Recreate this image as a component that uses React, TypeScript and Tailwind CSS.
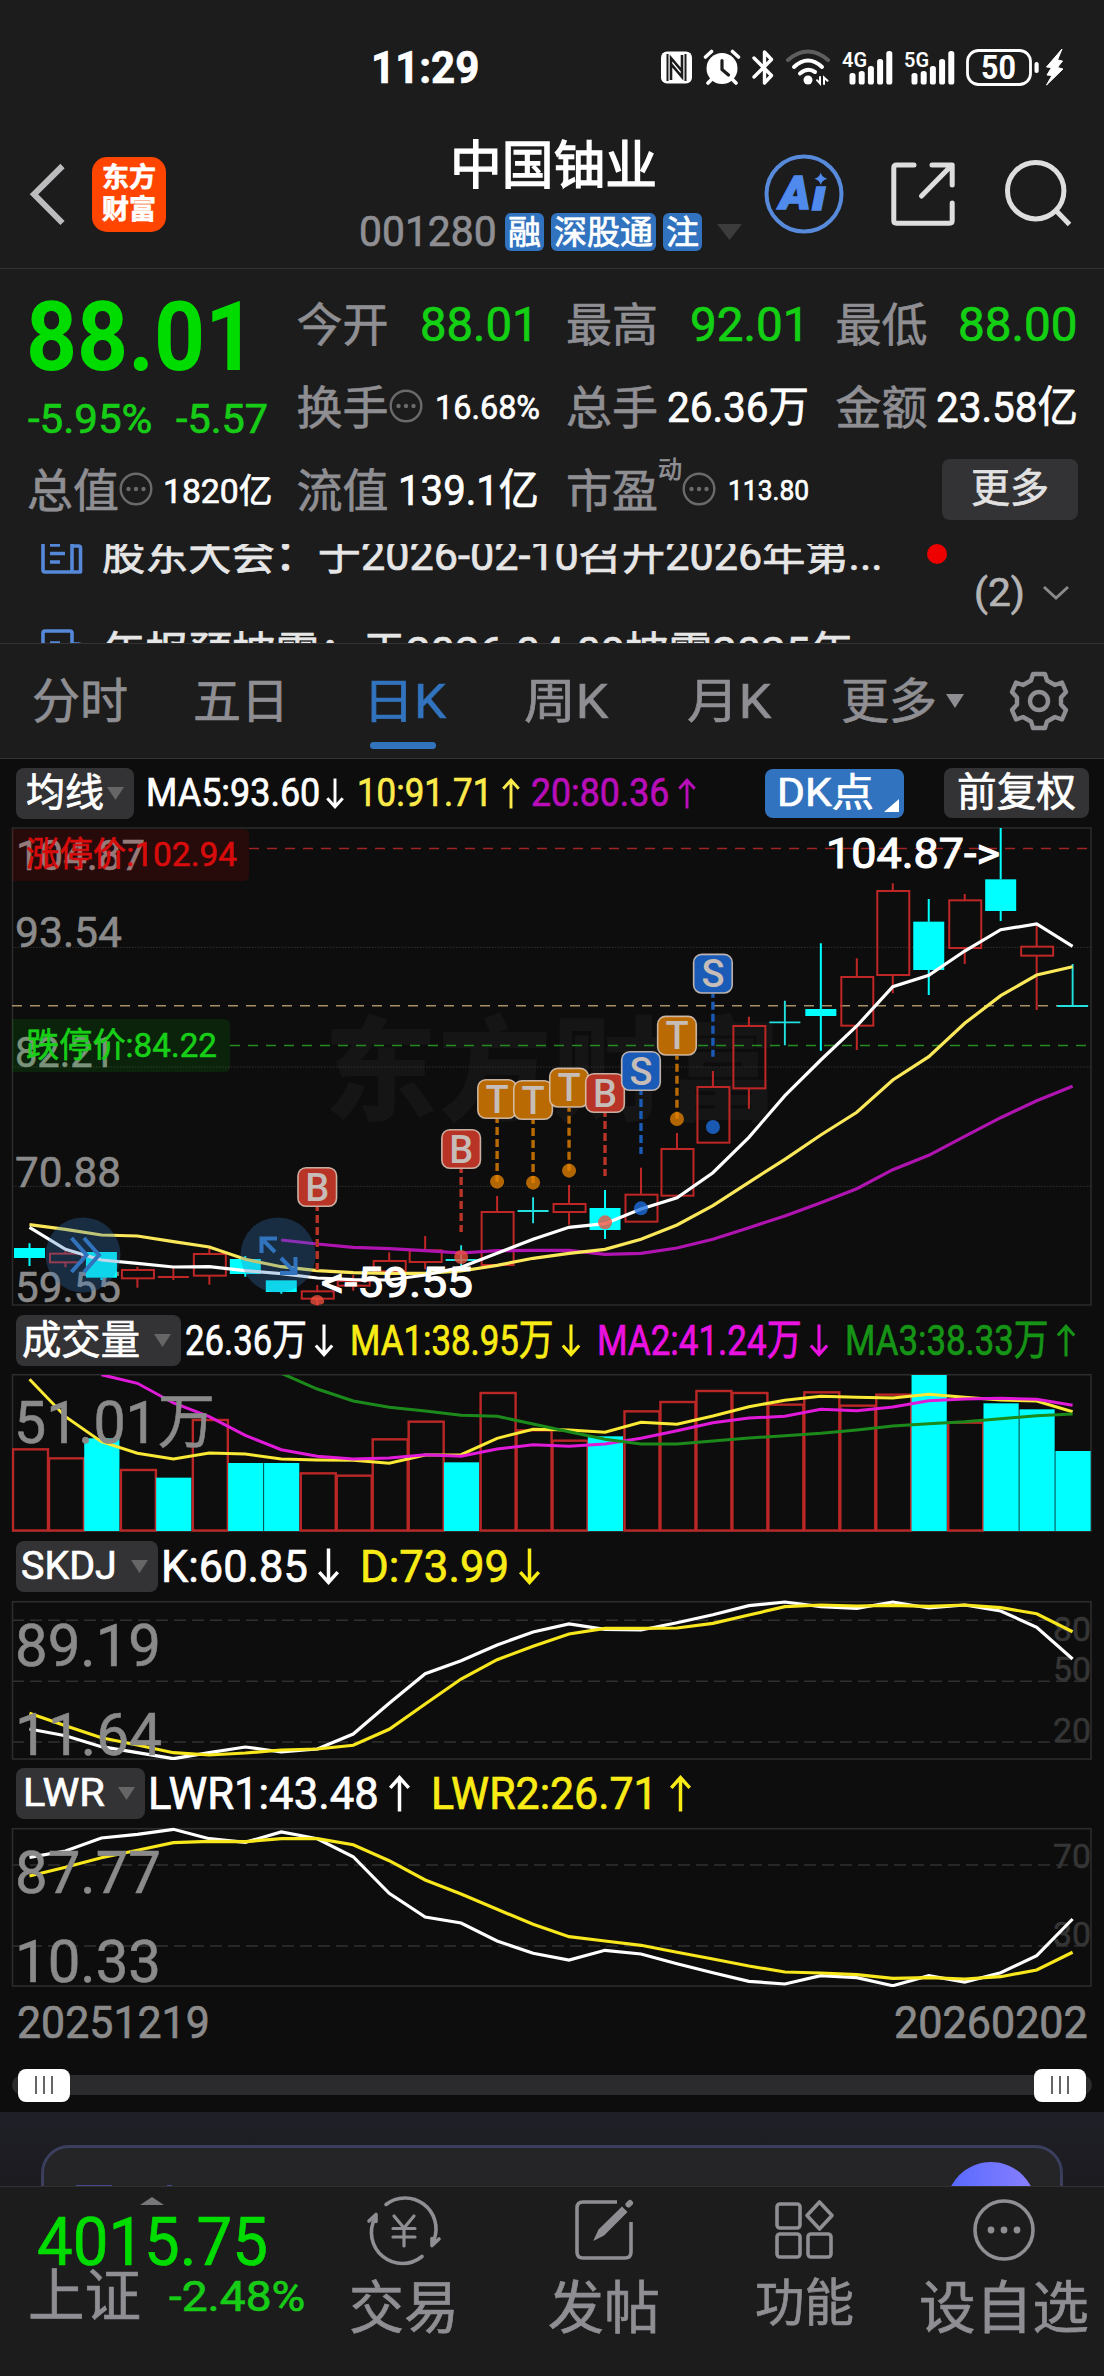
import { useLayoutEffect, useRef, type ReactNode } from "react";

/* Text squeezed or stretched horizontally to fill the width of its box. */
function Fit({ className = "", children }: { className?: string; children: ReactNode }) {
  const outer = useRef<HTMLSpanElement>(null);
  const inner = useRef<HTMLSpanElement>(null);
  useLayoutEffect(() => {
    const fit = () => {
      if (!outer.current || !inner.current) return;
      inner.current.style.transform = `scaleX(${outer.current.offsetWidth / inner.current.offsetWidth})`;
    };
    fit();
    document.fonts?.ready.then(fit);
  }, []);
  return (
    <span ref={outer} className={`inline-block shrink-0 whitespace-nowrap text-left leading-none ${className}`}>
      <span ref={inner} className="inline-block origin-left leading-none">{children}</span>
    </span>
  );
}

/* ---------- status bar ---------- */

const BARS = [73, 71, 66, 59, 51];
function Signal({ label }: { label: string }) {
  return (
    <svg className="h-[38px] w-[52px]" viewBox="842 49 52 38" fill="#fff">
      <text x="842" y="67" fontSize="20" fontWeight="600" textLength="25" lengthAdjust="spacingAndGlyphs">{label}</text>
      {BARS.map((y, i) => (
        <rect key={y} x={849.5 + i * 9.2} y={y} width="6" height={84.5 - y} rx="2.6" />
      ))}
    </svg>
  );
}

function StatusBar() {
  return (
    <div className="flex h-[136px] text-white">
      <div className="flex h-[136px] w-[661px] items-center pl-[371px]">
        <Fit className="w-[108px] text-[44px] font-bold">11:29</Fit>
      </div>
      <div className="flex h-[136px] items-center">
        <svg className="h-[38px] w-[32px]" viewBox="661 49 32 38">
          <rect x="661" y="51.5" width="31" height="32" rx="6" fill="#fff" />
          <path d="M667.5 54v27M685.5 54v27" stroke="#1c1c1c" strokeWidth="2" />
          <path d="M671 80V58l11 13M682 55v22l-11-13" stroke="#1c1c1c" strokeWidth="2.6" fill="none" />
        </svg>
        <svg className="ml-[10px] h-[38px] w-[38px]" viewBox="703 49 38 38">
          <circle cx="722" cy="68.5" r="15.5" fill="#fff" />
          <path d="M705.5 57l6-5.500M738.500 57l-6-5.500M712 79l-4 4M732 79l4 4" stroke="#fff" strokeWidth="3.600" strokeLinecap="round" />
          <path d="M722 60.500v9l6.500 5.500" stroke="#1c1c1c" strokeWidth="3.200" fill="none" strokeLinecap="round" />
        </svg>
        <svg className="ml-[10px] h-[38px] w-[24px]" viewBox="751 49 24 38" fill="none" stroke="#fff" strokeWidth="3.4" strokeLinejoin="round" strokeLinecap="round">
          <path d="M754 58l17.500 17.500-7 7.500V52l7 7.500L754 77" />
        </svg>
        <svg className="ml-[10px] h-[38px] w-[46px]" viewBox="785 49 46 38" fill="none" stroke="#fff" strokeWidth="4" strokeLinecap="round">
          <path d="M788 60Q808 43 828 60" stroke="#5e5e5e" />
          <path d="M794 67Q808 54 822 67" />
          <path d="M800 73.500Q808 67 815 72" />
          <circle cx="808" cy="80" r="4.500" fill="#fff" stroke="none" />
          <path d="M820 77v6.500l-3-3.300M824 84v-6.500l3.500 3.300" strokeWidth="2" />
        </svg>
        <span className="ml-[11px] flex"><Signal label="4G" /></span>
        <span className="ml-[10px] flex"><Signal label="5G" /></span>
        <svg className="ml-[10px] h-[38px] w-[100px]" viewBox="966 49 100 38">
          <rect x="967.500" y="50.500" width="63" height="34" rx="11" fill="none" stroke="#fff" strokeWidth="2.800" />
          <text x="981" y="79.300" fontSize="33" fontWeight="700" fill="#fff" textLength="35" lengthAdjust="spacingAndGlyphs">50</text>
          <rect x="1034.500" y="62" width="4.200" height="11" rx="2" fill="#fff" />
          <path d="M1062 49l-15.500 18 5 0.500-4.500 7.500 5 0.500-5.500 9.500 16.500-16-5.500-1.500 5-6.500-5-1z" fill="#fff" stroke="#fff" strokeWidth="1" strokeLinejoin="round" />
        </svg>
      </div>
    </div>
  );
}

/* ---------- header ---------- */

function Badge({ w, tw, children }: { w: string; tw: string; children: ReactNode }) {
  return (
    <span className={`flex h-[38px] items-center justify-center rounded-[6px] bg-[#3173bf] text-[33px] text-white ${w}`}>
      <Fit className={tw}>{children}</Fit>
    </span>
  );
}

function Header() {
  return (
    <header className="flex h-[133px] border-b border-[#333335]">
      <svg className="mt-[26px] ml-[28px] h-[66px] w-[40px]" viewBox="28 162 40 66" fill="none" stroke="#bcbcbe" strokeWidth="6">
        <path d="M62.500 166L34 194.300 62.500 223" />
      </svg>
      <div className="mt-[21px] ml-[24px] flex h-[75px] w-[74px] flex-col items-center justify-center rounded-[15px] bg-[#ff4500] text-[27px] leading-[31.500px] font-bold text-white">
        <span>东方</span>
        <span>财富</span>
      </div>
      <div className="ml-[182px] w-[400px]">
        <div className="flex h-[62px] items-center pl-[102px] text-[52px] text-white [-webkit-text-stroke:1.4px]">
          <Fit className="w-[207px]">中国铀业</Fit>
        </div>
        <div className="mt-[14px] flex h-[40px] items-center pl-[11px]">
          <Fit className="w-[138px] text-[42px] text-[#8e8e93]">001280</Fit>
          <span className="ml-[8px] flex gap-[7px]">
            <Badge w="w-[39px]" tw="w-[33px]">融</Badge>
            <Badge w="w-[105px]" tw="w-[99px]">深股通</Badge>
            <Badge w="w-[39px]" tw="w-[33px]">注</Badge>
          </span>
          <svg className="ml-[15px] h-[16px] w-[25px]" viewBox="0 0 25 16"><path d="M0 0h25L12.500 16z" fill="#3c3c3c" /></svg>
        </div>
      </div>
      <svg className="mt-[18px] ml-[16px] h-[80px] w-[80px] shrink-0" viewBox="764 154 80 80">
        <circle cx="804" cy="194" r="37.500" fill="none" stroke="#578adb" strokeWidth="4" />
        <g fill="#4f8aec" stroke="#4f8aec" strokeWidth="1.500" fontWeight="900" fontStyle="italic" fontSize="46">
          <text x="779.500" y="208.500" textLength="31" lengthAdjust="spacingAndGlyphs">A</text>
          <text x="812" y="209.500" fontSize="42" textLength="14" lengthAdjust="spacingAndGlyphs">ı</text>
        </g>
        <path d="M820.700 172.500Q822 177.500 827.200 178.700 822 180 820.700 185 819.500 180 814.500 178.700 819.500 177.500 820.700 172.500z" fill="#4f8aec" />
      </svg>
      <svg className="mt-[22px] ml-[43px] h-[72px] w-[72px] shrink-0" viewBox="887 158 72 72" fill="none" stroke="#dedede" strokeWidth="5" strokeLinecap="round" strokeLinejoin="round">
        <path d="M914 165H896.500Q893.800 165 893.800 168V220.500Q893.800 223.200 896.500 223.200H949.500Q952.200 223.200 952.200 220.500V203" />
        <path d="M932 165H952.200V185M951 166L921.500 196" />
      </svg>
      <svg className="mt-[20px] ml-[43px] h-[72px] w-[72px] shrink-0" viewBox="1002 156 72 72" fill="none" stroke="#dedede" strokeWidth="5">
        <circle cx="1035.700" cy="190.700" r="28.200" />
        <path d="M1055.500 210L1069.500 224.500" />
      </svg>
    </header>
  );
}

/* ---------- quote ---------- */

function Info() {
  return (
    <svg className="h-[36px] w-[34px] shrink-0 -translate-y-[2px]" viewBox="0 0 34 36">
      <circle cx="17" cy="18" r="15.300" fill="none" stroke="#6a6a6c" strokeWidth="2.400" />
      <circle cx="9.500" cy="18" r="2.200" fill="#6a6a6c" />
      <circle cx="17" cy="18" r="2.200" fill="#6a6a6c" />
      <circle cx="24.500" cy="18" r="2.200" fill="#6a6a6c" />
    </svg>
  );
}

function Cell({ label, children, className = "" }: { label: string; children: ReactNode; className?: string }) {
  return (
    <div className={`flex h-[83px] items-center ${className}`}>
      <Fit className="-ml-px w-[92px] text-[46px] text-[#8e8e93]">{label}</Fit>
      {children}
    </div>
  );
}

function Quote() {
  return (
    <section className="grid grid-cols-4 gap-x-[30px] px-[28px] pt-[14px]">
      <div className="row-span-2 flex flex-col">
        <div className="flex h-[107px] items-center text-[96px] font-bold text-[#00dc00] [-webkit-text-stroke:0px]">
          <Fit className="-ml-[2px] w-[230px]">88.01</Fit>
        </div>
        <div className="flex h-[59px] items-center justify-between text-[40px] text-[#17cc17]">
          <Fit className="w-[124px]">-5.95%</Fit>
          <Fit className="w-[92px]">-5.57</Fit>
        </div>
      </div>
      <Cell label="今开" className="justify-between"><Fit className="-mr-[2px] w-[119px] text-[48px] text-[#14d014]">88.01</Fit></Cell>
      <Cell label="最高" className="justify-between"><Fit className="-mr-[3px] w-[120px] text-[48px] text-[#14d014]">92.01</Fit></Cell>
      <Cell label="最低" className="justify-between"><Fit className="-mr-[2px] w-[120px] text-[48px] text-[#14d014]">88.00</Fit></Cell>
      <Cell label="换手"><Info /><Fit className="ml-[12px] w-[105px] text-[33px] text-white">16.68%</Fit></Cell>
      <Cell label="总手" className="justify-between"><Fit className="-mr-[2px] w-[142px] text-[43px] text-white">26.36万</Fit></Cell>
      <Cell label="金额" className="justify-between"><Fit className="-mr-[2px] w-[142px] text-[43px] text-white">23.58亿</Fit></Cell>
      <Cell label="总值"><Info /><Fit className="ml-[10px] w-[109px] text-[34px] text-white">1820亿</Fit></Cell>
      <Cell label="流值" className="justify-between"><Fit className="-mr-[2px] w-[141px] text-[43px] text-white">139.1亿</Fit></Cell>
      <Cell label="市盈">
        <span className="mb-[42px] w-[25px] text-[24px] leading-none text-[#8e8e93]">动</span>
        <Info />
        <Fit className="ml-[12px] w-[81px] text-[28px] text-white">113.80</Fit>
      </Cell>
      <div className="flex h-[83px] items-center justify-end">
        <button className="-mt-[3px] -mr-[2px] flex h-[61px] w-[136px] items-center justify-center rounded-[8px] bg-[#333335] text-[40px] text-[#e2e2e2]">
          <Fit className="w-[78px]">更多</Fit>
        </button>
      </div>
    </section>
  );
}

function NewsIcon() {
  return (
    <svg className="h-[44px] w-[42px]" viewBox="0 0 42 44" fill="none" stroke="#5588d8" strokeWidth="3.600" strokeLinejoin="round">
      <path d="M2 4Q2 2 4 2H29Q31 2 31 4V41H4Q2 41 2 39zM31 15h6.500Q39.500 15 39.500 17v24H31" />
      <path d="M9 14h10M9 22.500h15M9 31h10" />
    </svg>
  );
}

function News() {
  return (
    <section className="flex h-[112px] border-b border-[#333335] pt-[12px]">
      <div className="h-[99px] w-[915px] overflow-hidden text-[42px] text-[#e6e6e6]">
        <div className="-mt-[15px] flex h-[48px] items-center pl-[41px]">
          <NewsIcon />
          <Fit className="mt-[6px] ml-[19px] w-[781px]">股东大会：于2026-02-10召开2026年第...</Fit>
        </div>
        <div className="mt-[50px] flex h-[48px] items-center pl-[41px]">
          <NewsIcon />
          <Fit className="mt-[4px] ml-[19px] w-[786px]">年报预披露：于2026-04-09披露2025年...</Fit>
        </div>
      </div>
      <div className="flex flex-1 flex-col pl-[12px]">
        <span className="h-[20px] w-[20px] rounded-full bg-[#ef0000]" />
        <div className="mt-[7px] flex h-[44px] items-center pl-[47px]">
          <Fit className="w-[51px] text-[39px] text-[#b4b4b4]">(2)</Fit>
          <svg className="ml-[17px] h-[16px] w-[28px]" viewBox="0 0 28 16" fill="none" stroke="#8a8a8a" strokeWidth="3"><path d="M2 2l12 11L26 2" /></svg>
        </div>
      </div>
    </section>
  );
}

/* ---------- tabs ---------- */

function Tabs() {
  return (
    <nav className="flex h-[115px] items-center border-b border-[#333335] text-[48px] text-[#8e8e93]">
      <Fit className="mt-[2px] ml-[32px] w-[96px]">分时</Fit>
      <Fit className="mt-[2px] ml-[65px] w-[96px]">五日</Fit>
      <div className="relative mt-[2px] ml-[74px] flex text-[#3273be]">
        <Fit className="w-[83px]">日K</Fit>
        <span className="absolute top-[64px] left-[7px] h-[7px] w-[66px] rounded-full bg-[#3273be]" />
      </div>
      <Fit className="mt-[2px] ml-[78px] w-[84px]">周K</Fit>
      <Fit className="mt-[2px] ml-[79px] w-[84px]">月K</Fit>
      <Fit className="mt-[2px] ml-[70px] w-[96px]">更多</Fit>
      <svg className="ml-[9px] h-[14px] w-[18px]" viewBox="0 0 18 14"><path d="M0 0h18L9 14z" fill="#8e8e93" /></svg>
      <svg className="ml-[44px] h-[62px] w-[62px]" viewBox="-31 -31 62 62" fill="none" stroke="#8e8e93" strokeWidth="4.400" strokeLinejoin="round">
        <path d="M-6-27H6L8-20.500 16-16 23-18.500 27-9 22-3.500V3.500L27 9 23 18.500 16 16 8 20.500 6 27H-6L-8 20.500-16 16-23 18.500-27 9-22 3.500V-3.500L-27-9-23-18.500-16-16-8-20.500z" />
        <circle r="9" />
      </svg>
    </nav>
  );
}

/* ---------- indicator rows ---------- */

function Arrow({ up = false, className }: { up?: boolean; className: string }) {
  return (
    <svg className={`shrink-0 ${className}`} viewBox="0 0 22 36" fill="none" stroke="currentColor" strokeWidth="3.400">
      {up ? <path d="M11 35.500V2M2 12.500L11 2.500l9 10" /> : <path d="M11 .5V34M2 23.500l9 10 9-10" />}
    </svg>
  );
}

function Picker({ className, textWidth, children }: { className: string; textWidth: string; children: ReactNode }) {
  return (
    <button className={`flex h-[51px] shrink-0 items-center justify-between rounded-[8px] bg-[#333335] pr-[10px] text-left text-white ${className}`}>
      <Fit className={textWidth}>{children}</Fit>
      <svg className="h-[13px] w-[17px]" viewBox="0 0 17 13"><path d="M0 0h17L8.500 13z" fill="#666" /></svg>
    </button>
  );
}

/* ---------- charts ---------- */

const cx = (i: number) => 29.5 + i * 35.97;
const line = (ys: number[], top: number, start = 0) =>
  ys.map((y, i) => `${cx(i + start).toFixed(1)},${(top + y / 3).toFixed(1)}`).join(" ");

type Candle = [up: 0 | 1, high: number, top: number, bottom: number, low: number];
const CANDLES: Candle[] = [
  [0, 1300, 1314, 1344, 1368], [1, 1324, 1331, 1357, 1372], [0, 1326, 1326, 1403, 1410], [1, 1370, 1380, 1405, 1433],
  [1, 1375, 1401, 1401, 1410], [1, 1310, 1332, 1397, 1424], [0, 1338, 1347, 1392, 1400], [0, 1411, 1411, 1446, 1451],
  [1, 1425, 1444, 1466, 1487], [1, 1395, 1413, 1427, 1442], [1, 1327, 1353, 1384, 1390], [1, 1278, 1321, 1356, 1378],
  [0, 1306, 1350, 1350, 1375], [1, 1158, 1206, 1365, 1366], [0, 1162, 1203, 1203, 1240], [1, 1125, 1182, 1206, 1244],
  [0, 1140, 1194, 1260, 1287], [1, 1073, 1154, 1235, 1235], [1, 969, 1017, 1157, 1158], [1, 783, 831, 998, 999],
  [1, 620, 648, 835, 896], [0, 572, 637, 637, 706], [0, 400, 597, 618, 722], [1, 445, 501, 647, 720],
  [1, 220, 243, 495, 550], [0, 267, 335, 480, 555], [1, 252, 271, 414, 462], [0, 54, 208, 303, 333],
  [1, 340, 410, 437, 600], [0, 462, 588, 588, 588],
];
const MA5 = [1252, 1318, 1350, 1360, 1371, 1370, 1382, 1391, 1404, 1409, 1410, 1395, 1372, 1330, 1288, 1252, 1241, 1197, 1163, 1088, 982, 857, 750, 648, 530, 496, 423, 359, 342, 409];
const MA10 = [1244, 1258, 1275, 1278, 1295, 1311, 1348, 1370, 1382, 1388, 1390, 1390, 1383, 1366, 1345, 1330, 1318, 1288, 1245, 1187, 1117, 1048, 975, 907, 810, 740, 640, 557, 495, 470];
const MA20 = [1290, 1302, 1312, 1316, 1322, 1329, 1322, 1321, 1321, 1333, 1330, 1314, 1288, 1253, 1218, 1178, 1136, 1079, 1036, 979, 923, 872, 829];

const MARKS: { i: number; k: "B" | "T" | "S"; y: number; dot: number }[] = [
  { i: 8, k: "B", y: 1131, dot: 1476 }, { i: 12, k: "B", y: 1017, dot: 1341 }, { i: 13, k: "T", y: 867, dot: 1115 },
  { i: 14, k: "T", y: 870, dot: 1118 }, { i: 15, k: "T", y: 833, dot: 1082 }, { i: 16, k: "B", y: 849, dot: 1237 },
  { i: 17, k: "S", y: 783, dot: 1195 }, { i: 18, k: "T", y: 677, dot: 927 }, { i: 19, k: "S", y: 491, dot: 951 },
];
const MARK_FILL = { B: "#b83426", T: "#b96a02", S: "#1a5bb7" };
const DOT_FILL = { B: "#f0503c", T: "#e08000", S: "#1f6fe0" };

function Label({ x, y, w, size, fill = "#8a8a8a", bold = 0.6, children }: { x: number; y: number; w: number; size: number; fill?: string; bold?: number; children: string }) {
  return <text x={x} y={y} fontSize={size} fill={fill} stroke={fill} strokeWidth={bold} textLength={w} lengthAdjust="spacingAndGlyphs">{children}</text>;
}

function PriceChart() {
  return (
    <svg className="block h-[482px] w-[1104px]" viewBox="0 826 1104 482">
      <text x="324" y="1111" fontSize="113" fontWeight="900" fill="#151515" textLength="456">东方财富</text>
      <rect x="12.500" y="828" width="1078.500" height="477" fill="none" stroke="#2a2a2a" strokeWidth="1.600" />
      {[412, 771, 1129].map((y) => (
        <path key={y} d={`M12 ${810 + y / 3}H1091`} stroke="#333" strokeWidth="1" strokeDasharray="1.500 1.500" />
      ))}
      <Label x={16} y={870} w={129} size={43}>104.87</Label>
      <Label x={15} y={947} w={107} size={43}>93.54</Label>
      <Label x={15} y={1067} w={100} size={43}>82.21</Label>
      <Label x={15} y={1186.500} w={106} size={43}>70.88</Label>
      <Label x={15} y={1301.500} w={106} size={43}>59.55</Label>
      <path d="M12 829H243Q249 829 249 835V875Q249 881 243 881H12z" fill="#ff0000" fillOpacity=".11" />
      <path d="M12 1019H224Q230 1019 230 1025V1066Q230 1072 224 1072H12z" fill="#00e600" fillOpacity=".1" />
      <Label x={26} y={866} w={211} size={34} fill="#d80c0c">涨停价:102.94</Label>
      <Label x={26} y={1057} w={191} size={34} fill="#18cf18">跌停价:84.22</Label>
      <path d="M249 848.500H1091" stroke="#a02424" strokeWidth="1.400" strokeDasharray="10 8" />
      <path d="M12 1005.700H1091" stroke="#a88f66" strokeWidth="1.600" strokeDasharray="10 8" />
      <path d="M230 1045.600H1091" stroke="#238c23" strokeWidth="1.500" strokeDasharray="10 8" />
      {CANDLES.map(([up, h, t, b, l], i) => {
        const x = cx(i);
        const [hy, ty, by, ly] = [h, t, b, l].map((v) => 810 + v / 3);
        const c = up ? "#bf2626" : "#00ffff";
        if (b - t < 3)
          return <path key={i} d={`M${x} ${hy}V${ly}M${x - 15.5} ${ty}h31`} stroke={up ? c : "#22e0e0"} strokeWidth="1.900" />;
        return (
          <g key={i} stroke={c} strokeWidth="2">
            <path d={`M${x} ${hy}V${ty}M${x} ${by}V${ly}`} />
            {up ? (
              <rect x={x - 15.5} y={ty} width="32" height={by - ty} fill="none" />
            ) : (
              <rect x={x - 15.5} y={ty} width="31" height={by - ty} fill={c} stroke="none" />
            )}
          </g>
        );
      })}
      <g fill="none" strokeWidth="3.200">
        <polyline points={line(MA20, 810, 7)} stroke="#b014b0" />
        <polyline points={line(MA10, 810)} stroke="#fbe85a" />
        <polyline points={line(MA5, 810)} stroke="#fff" />
      </g>
      {MARKS.map(({ i, k, y, dot }) => {
        const x = cx(i);
        const my = 810 + y / 3;
        return (
          <g key={i}>
            <path d={`M${x} ${my + 20}V${my + 83}`} stroke={MARK_FILL[k]} strokeWidth="3.400" strokeDasharray="8 4" strokeDashoffset="4" />
            <path d={`M${x - 7} ${810 + dot / 3}a7 7 0 0 1 14 0a7 ${i === 8 ? 3 : 7} 0 0 1-14 0z`} fill={DOT_FILL[k]} fillOpacity=".78" />
            <rect x={x - 19.300} y={my - 19.300} width="38.600" height="38.600" rx="8" fill={MARK_FILL[k]} stroke="#dcc9bb" strokeOpacity=".85" strokeWidth="1.600" />
            <text x={x} y={my + 13.500} fontSize="38" fontWeight="500" fill="#c6bdb8" textAnchor="middle">{k}</text>
          </g>
        );
      })}
      <Label x={826} y={867.500} w={174} size={43} fill="#fff" bold={1.100}>{"104.87->"}</Label>
      <Label x={321} y={1296.500} w={152} size={43} fill="#fff" bold={1.100}>{"<-59.55"}</Label>
      <g fill="none" stroke="#3273be" strokeWidth="4">
        <circle cx="83" cy="1255" r="37.500" fill="#3273be" fillOpacity=".3" stroke="none" />
        <path d="M71.500 1238l15 17-15 17M84 1238l15 17-15 17" />
        <circle cx="278" cy="1255" r="37.500" fill="#3273be" fillOpacity=".3" stroke="none" />
        <path d="M277 1238.500H261.500V1253M261.500 1238.500L275 1252M280 1273H295.500V1257M295.500 1273L281 1258" />
      </g>
    </svg>
  );
}

const VOL: [0 | 1, number][] = [
  [1, 418], [1, 445], [0, 385], [1, 480], [0, 503], [1, 330], [0, 459], [0, 459], [1, 490], [1, 497],
  [1, 388], [1, 335], [0, 457], [1, 249], [1, 361], [1, 392], [0, 379], [1, 304], [1, 276], [1, 243],
  [1, 249], [1, 284], [1, 247], [1, 287], [1, 254], [0, 195], [1, 338], [0, 280], [0, 298], [0, 423],
];
const V1 = [208, 320, 395, 430, 447, 429, 432, 447, 450, 451, 460, 435, 434, 385, 358, 360, 367, 337, 343, 318, 290, 271, 259, 262, 264, 253, 262, 270, 273, 305];
const V2 = [194, 220, 279, 320, 376, 419, 439, 447, 444, 434, 439, 417, 404, 409, 402, 385, 362, 338, 324, 319, 298, 302, 291, 272, 267, 265, 268, 286];
const V3 = [190, 237, 273, 292, 303, 316, 319, 342, 365, 388, 402, 402, 393, 384, 377, 370, 360, 348, 341, 335, 326, 317, 312];

function VolumeChart() {
  return (
    <svg className="block h-[160px] w-[1104px]" viewBox="0 1373 1104 160">
      <clipPath id="vol"><rect x="12" y="1375" width="1080" height="158" /></clipPath>
      <rect x="12.500" y="1374.700" width="1078.500" height="156.500" fill="none" stroke="#2c2c2c" strokeWidth="1.600" />
      <g clipPath="url(#vol)">
        {VOL.map(([up, t], i) => {
          const x = 12 + i * 35.97;
          const y = 1310 + t / 3;
          return up ? (
            <rect key={i} x={x + 1} y={y} width="35" height={1530.500 - y} fill="none" stroke="#bb2727" strokeWidth="2.400" />
          ) : (
            <rect key={i} x={x + .3} y={y} width="35.200" height={1531 - y} fill="#00ffff" />
          );
        })}
        <g fill="none" strokeWidth="3">
          <polyline points={line(V1, 1310)} stroke="#fae935" />
          <polyline points={line(V2, 1310, 2)} stroke="#e01ad8" />
          <polyline points={line(V3, 1310, 7)} stroke="#1b8a1b" />
        </g>
      </g>
      <Label x={14} y={1443} w={201} size={60}>51.01万</Label>
    </svg>
  );
}

const K = [597, 617, 650, 668, 686, 668, 651, 666, 657, 612, 520, 431, 392, 345, 306, 282, 298, 300, 278, 254, 227, 216, 230, 235, 216, 234, 225, 243, 292, 387];
const D = [550, 587, 623, 645, 668, 675, 669, 660, 657, 646, 598, 522, 447, 389, 349, 312, 295, 295, 294, 280, 255, 230, 225, 228, 226, 229, 225, 233, 251, 305];
const L1 = [292, 273, 234, 223, 208, 236, 247, 216, 236, 290, 400, 471, 489, 543, 580, 600, 571, 582, 611, 638, 664, 672, 647, 653, 677, 647, 666, 638, 587, 477];
const L2 = [348, 322, 293, 271, 248, 244, 245, 236, 236, 254, 302, 360, 402, 448, 493, 530, 543, 556, 577, 597, 618, 636, 639, 644, 655, 653, 657, 650, 630, 577];

function SkdjChart() {
  return (
    <svg className="block h-[160px] w-[1104px]" viewBox="0 1600 1104 160">
      <rect x="12.500" y="1601.700" width="1078.500" height="157.300" fill="none" stroke="#2c2c2c" strokeWidth="1.600" />
      <path d="M12 1620.300H1091M12 1681.300H1091M12 1742H1091" stroke="#303030" strokeWidth="1.400" strokeDasharray="12 6" />
      <Label x={1053} y={1640.500} w={38} size={34} fill="#353535">80</Label>
      <Label x={1053} y={1680.500} w={38} size={34} fill="#353535">50</Label>
      <Label x={1053} y={1742} w={38} size={34} fill="#353535">20</Label>
      <g fill="none" strokeWidth="3.200">
        <polyline points={line(K, 1530)} stroke="#fff" />
        <polyline points={line(D, 1530)} stroke="#f8e71c" />
      </g>
      <Label x={15} y={1665.500} w={146} size={60}>89.19</Label>
      <Label x={15} y={1754.500} w={147} size={60}>11.64</Label>
    </svg>
  );
}

function LwrChart() {
  return (
    <svg className="block h-[160px] w-[1104px]" viewBox="0 1827 1104 160">
      <rect x="12.500" y="1828.700" width="1078.500" height="157.300" fill="none" stroke="#2c2c2c" strokeWidth="1.600" />
      <path d="M12 1865H1091M12 1946H1091" stroke="#303030" strokeWidth="1.400" strokeDasharray="12 6" />
      <Label x={1053} y={1868} w={38} size={34} fill="#353535">70</Label>
      <Label x={1053} y={1945.500} w={38} size={34} fill="#353535">30</Label>
      <g fill="none" strokeWidth="3.200">
        <polyline points={line(L1, 1760)} stroke="#fff" />
        <polyline points={line(L2, 1760)} stroke="#f8e71c" />
      </g>
      <Label x={15} y={1893} w={146} size={60}>87.77</Label>
      <Label x={15} y={1981.5} w={146} size={60}>10.33</Label>
    </svg>
  );
}

function Handle() {
  return (
    <span className="flex h-[33px] w-[52px] items-center justify-center gap-[6px] rounded-[8px] bg-white">
      <i className="h-[18px] w-[2px] bg-[#666]" />
      <i className="h-[18px] w-[2px] bg-[#666]" />
      <i className="h-[18px] w-[2px] bg-[#666]" />
    </span>
  );
}

function Charts() {
  return (
    <section className="h-[1353px] bg-[#0d0d0d]">
      <div className="flex h-[67px] items-center pt-[1px] pl-[16px] text-[38px]">
        <Picker className="w-[118px] pl-[10px] text-[39px]" textWidth="w-[78px]">均线</Picker>
        <Fit className="ml-[12px] w-[174px] text-white">MA5:93.60</Fit>
        <Arrow className="ml-[5px] h-[31px] w-[20px] text-white" />
        <Fit className="ml-[12px] w-[135px] text-[#faea4c]">10:91.71</Fit>
        <Arrow up className="ml-[9px] h-[31px] w-[20px] text-[#faea4c]" />
        <Fit className="ml-[10px] w-[138px] text-[#b80db8]">20:80.36</Fit>
        <Arrow up className="ml-[8px] h-[31px] w-[20px] text-[#b80db8]" />
        <button className="ml-[68px] flex h-[49px] w-[139px] items-center rounded-[8px] bg-[#3173bf] pl-[12px] text-[39px] text-white">
          <Fit className="w-[97px]">DK点</Fit>
          <svg className="mt-[25px] ml-[10px] h-[13px] w-[15px]" viewBox="0 0 15 13"><path d="M15 0V13H0z" fill="#fff" /></svg>
        </button>
        <button className="ml-[40px] flex h-[50px] w-[145px] items-center justify-center rounded-[8px] bg-[#333335] text-[40px] text-white">
          <Fit className="w-[119px]">前复权</Fit>
        </button>
      </div>
      <PriceChart />
      <div className="flex h-[65px] items-center pl-[16px] text-[43px]">
        <Picker className="w-[165px] pl-[6px] text-[40px]" textWidth="w-[118px]">成交量</Picker>
        <Fit className="ml-[4px] w-[122px] text-white">26.36万</Fit>
        <Arrow className="ml-[7px] h-[37px] w-[20px] text-white" />
        <Fit className="ml-[16px] w-[204px] text-[#f9eb16]">MA1:38.95万</Fit>
        <Arrow className="ml-[7px] h-[37px] w-[20px] text-[#f9eb16]" />
        <Fit className="ml-[16px] w-[205px] text-[#ea12e0]">MA2:41.24万</Fit>
        <Arrow className="ml-[7px] h-[37px] w-[20px] text-[#ea12e0]" />
        <Fit className="ml-[16px] w-[204px] text-[#169416]">MA3:38.33万</Fit>
        <Arrow up className="ml-[7px] h-[37px] w-[20px] text-[#169416]" />
      </div>
      <VolumeChart />
      <div className="flex h-[67px] items-center pl-[16px] text-[44px]">
        <Picker className="w-[142px] pl-[5px] text-[39px]" textWidth="w-[96px]">SKDJ</Picker>
        <Fit className="ml-[3px] w-[147px] text-white">K:60.85</Fit>
        <Arrow className="ml-[9px] h-[37px] w-[23px] text-white" />
        <Fit className="ml-[20px] w-[149px] text-[#f9eb16]">D:73.99</Fit>
        <Arrow className="ml-[9px] h-[37px] w-[23px] text-[#f9eb16]" />
      </div>
      <SkdjChart />
      <div className="flex h-[67px] items-center pl-[16px] text-[44px]">
        <Picker className="w-[129px] pl-[7px] text-[39px]" textWidth="w-[82px]">LWR</Picker>
        <Fit className="ml-[3px] w-[231px] text-white">LWR1:43.48</Fit>
        <Arrow up className="ml-[9px] h-[37px] w-[23px] text-white" />
        <Fit className="ml-[20px] w-[227px] text-[#f9eb16]">LWR2:26.71</Fit>
        <Arrow up className="ml-[11px] h-[37px] w-[23px] text-[#f9eb16]" />
      </div>
      <LwrChart />
      <div className="flex h-[72px] items-center justify-between pr-[16px] pl-[17px] text-[44px] text-[#8a8a8a]">
        <Fit className="w-[193px]">20251219</Fit>
        <Fit className="w-[194px]">20260202</Fit>
      </div>
      <div className="mx-[12px] mt-[16px] flex h-[20px] items-center justify-between rounded-full bg-[#2b2b2d] px-[6px]">
        <Handle />
        <Handle />
      </div>
    </section>
  );
}

/* ---------- bottom ---------- */

function Promo() {
  return (
    <section className="h-[74px] overflow-hidden bg-gradient-to-b from-[#1f1f27] to-[#1b1b20] px-[41px] pt-[33px]">
      <div className="flex h-[120px] justify-between rounded-[28px] border-[3px] border-[#3b3e5c] bg-[#252527] pr-[24px] pl-[32px]">
        <span className="mt-[37px] flex gap-[55px]">
          <i className="h-[3px] w-[36px] bg-[#454a8c]" />
          <i className="h-[3px] w-[5px] bg-[#454a8c]" />
        </span>
        <span className="mt-[14px] h-[90px] w-[90px] rounded-full bg-gradient-to-r from-[#5568ff] to-[#8a80ff]" />
      </div>
    </section>
  );
}

function NavItem({ icon, className, children }: { icon: ReactNode; className: string; children: string }) {
  return (
    <div className="flex w-[200px] flex-col items-center">
      <svg className="mt-[7px] h-[72px] w-[80px]" viewBox="-40 -36 80 72" fill="none" stroke="#8e8e93" strokeWidth="3.600" strokeLinecap="round">{icon}</svg>
      <Fit className={className}>{children}</Fit>
    </div>
  );
}

function BottomBar() {
  return (
    <footer className="flex h-[190px] border-t border-[#303032] text-[#8e8e93]">
      <div className="w-[304px] shrink-0">
        <svg className="mt-[10px] ml-[140px] block h-[8px] w-[24px]" viewBox="0 0 24 8"><path d="M12 0L24 8H0z" fill="#77777a" /></svg>
        <div className="mt-[5px] flex h-[66px] items-center pl-[37px] text-[66px] text-[#00dc00]">
          <Fit className="w-[231px]">4015.75</Fit>
        </div>
        <div className="-mt-[8px] flex h-[56px] items-center pl-[28px]">
          <Fit className="w-[113px] text-[57px]">上证</Fit>
          <Fit className="ml-[28px] w-[136px] text-[43px] text-[#17cc17]">-2.48%</Fit>
        </div>
      </div>
      <NavItem className="mt-[14px] w-[110px] text-[57px]" icon={
        <>
          <path d="M-18-25.500A31 31 0 0 1 30 10M18 26.500A31 31 0 0 1-29-12" />
          <path d="M-35-9l7-6.500 0 7M35 9l-7 6.500 0-7" strokeLinejoin="round" />
          <path d="M-10-14L0-2 10-14M0-2V16M-11-1.500H11M-11 7H11" strokeWidth="3.200" />
        </>
      }>交易</NavItem>
      <NavItem className="mt-[14px] w-[112px] text-[57px]" icon={
        <>
          <path d="M13-28H-21Q-27-28-27-22V22Q-27 28-21 28H21Q27 28 27 22V-8" strokeLinecap="butt" />
          <path d="M-7 7L-4 .5 18-21 21-18-1 4z" fill="#8e8e93" />
          <path d="M24.500-25.500L26-27" strokeWidth="6" />
        </>
      }>发帖</NavItem>
      <NavItem className="mt-[12px] w-[99px] text-[51px]" icon={
        <>
          <rect x="-27" y="-26" width="23" height="24" rx="3" />
          <rect x="-27" y="4" width="23" height="23" rx="3" />
          <rect x="4" y="4" width="23" height="23" rx="3" />
          <path d="M15.500-28L28-14.500 15.500-1 3-14.500z" strokeLinejoin="round" />
        </>
      }>功能</NavItem>
      <NavItem className="mt-[14px] w-[170px] text-[57px]" icon={
        <>
          <circle r="29" />
          <g fill="#8e8e93" stroke="none"><circle cx="-13" r="3.400" /><circle r="3.400" /><circle cx="13" r="3.400" /></g>
        </>
      }>设自选</NavItem>
    </footer>
  );
}

export default function App() {
  return (
    <main className="h-[2376px] w-[1104px] overflow-hidden bg-[#1c1c1c] font-['Roboto','Noto_Sans_CJK_SC',sans-serif] [-webkit-text-stroke:0.7px]">
      <StatusBar />
      <Header />
      <Quote />
      <News />
      <Tabs />
      <Charts />
      <Promo />
      <BottomBar />
    </main>
  );
}
